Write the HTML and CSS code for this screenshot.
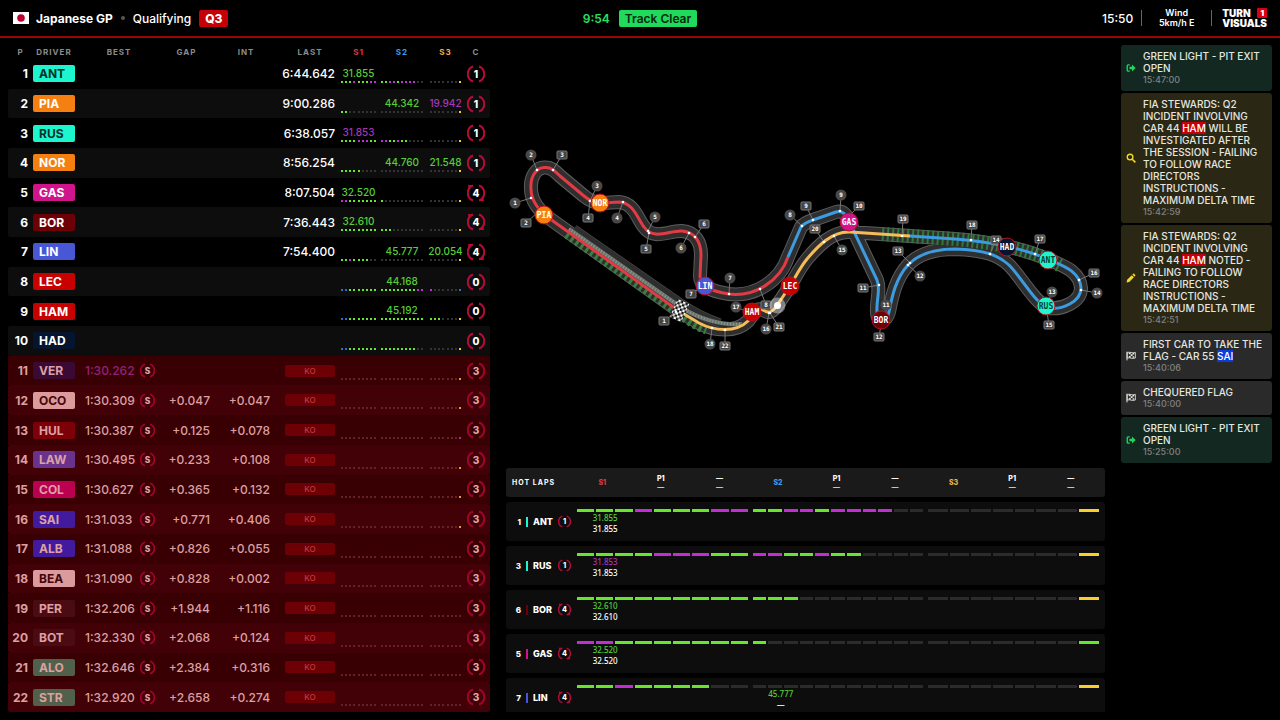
FILE: index.html
```html
<!DOCTYPE html>
<html lang="en">
<head>
<meta charset="utf-8">
<meta name="viewport" content="width=device-width, initial-scale=1">
<title>Japanese GP - Qualifying</title>
<link rel="stylesheet" href="styles.css">
</head>
<body>
<header class="topbar">
  <div class="event">
    <svg class="flag" viewBox="0 0 16 12" role="img" aria-label="Japan"><rect width="16" height="12" fill="#fff"/><circle cx="8" cy="6" r="3.8" fill="#bc002d"/></svg>
    <h1>Japanese GP</h1>
    <span class="bullet"></span>
    <span class="session">Qualifying</span>
    <span class="tag tag-red">Q3</span>
  </div>
  <div class="status">
    <span class="clock">9:54</span>
    <span class="tag tag-green">Track Clear</span>
  </div>
  <div class="info">
    <span class="local-time">15:50</span>
    <span class="divider"></span>
    <span class="wind">Wind<br>5km/h E</span>
    <span class="divider"></span>
    <span class="brand"><span class="brand-line">TURN<i>1</i></span><span class="brand-line">VISUALS</span></span>
  </div>
</header>
<main class="board">
  <table class="timing">
    <thead>
      <tr><th class="pos">P</th><th class="driver">DRIVER</th><th class="best">BEST</th><th class="gap">GAP</th><th class="int">INT</th><th class="last">LAST</th><th class="s1 red">S1</th><th class="s2 blue">S2</th><th class="s3 orange">S3</th><th class="tyre">C</th></tr>
    </thead>
    <tbody id="rows"></tbody>
  </table>
  <div class="center">
    <svg class="map" viewBox="506 45 599 417" role="img" aria-label="Track map">
      <defs>
        <path id="lap" d="M679 311 L553 221 Q531 206 531 189 C530 176 537 167 545 167.500 C551 167 555 171 560 176 L584 196 Q592 203 603 203 L619 202 C634 203 637 218 644 227 C654 241 670 230 682 231 C695 232 701 242 701 255 L700 276 C700 286 710 291 729 294 C755 297 780 281 788 257 L801 227 Q804 223 813 220 L836 212 C842 210 846 214 849 221 L877 280 C881 290 876 300 877 312 C877 323 887 322 889 312 C892 296 896 278 908 265 C920 252 940 249 955 249 C985 250 998 255 1009 265 C1022 278 1034 302 1048 308 C1062 310 1081 302 1081 288 C1080 270 1060 265 1048 259 C1018 247 990 242 955 239 L910 236 L850 232 C832 231 818 246 807 259 C799 269 795 278 790 286 L778 304 Q771 315 765 311 C756 306 755 312 748 321 C736 333 714 331 699 323 Z"/>
        <pattern id="chequer" width="5" height="5" patternUnits="userSpaceOnUse"><rect width="5" height="5" fill="#111"/><rect width="2.500" height="2.500" fill="#fff"/><rect x="2.500" y="2.500" width="2.500" height="2.500" fill="#fff"/></pattern>
      </defs>
      <use href="#lap" class="edge"/>
      <use href="#lap" class="asphalt"/>
      <path class="pit-edge" d="M574 229 L682 304 Q700 316 720 323"/>
      <path class="pit-asphalt" d="M574 229 L682 304 Q700 316 720 323"/>
      <path class="pit-lane" d="M569 229 L682 308 Q712 326 742 324"/>
      <path class="pit-dots" d="M569 229 L682 308 Q712 326 742 324"/>
      <path class="zone-side" d="M566 235 L677 313 Q690 325 706 331"/>
      <path class="zone" d="M882 234 L955 239 C990 242 1018 247 1048 259 L1061 266"/>
      <path class="line red" d="M676 309 L553 221 Q531 206 531 189 C530 176 537 167 545 167.500 C551 167 555 171 560 176 L584 196 Q592 203 603 203 L619 202 C634 203 637 218 644 227 C654 241 670 230 682 231 C695 232 701 242 701 255 L700 276 C700 286 710 291 729 294 C755 297 780 281 788 257"/>
      <path class="line blue" d="M788 257 L801 227 Q804 223 813 220 L836 212 C842 210 846 214 849 221 L877 280 C881 290 876 300 877 312 C877 323 887 322 889 312 C892 296 896 278 908 265 C920 252 940 249 955 249 C985 250 998 255 1009 265 C1022 278 1034 302 1048 308 C1062 310 1081 302 1081 288 C1080 270 1060 265 1048 259 C1018 247 990 242 955 239 L910 236"/>
      <path class="line orange" d="M910 236 L850 232 C832 231 818 246 807 259 C799 269 795 278 790 286 L778 304 Q771 315 765 311 C756 306 755 312 748 321 C736 333 714 331 699 323 L684 314"/>
      <rect x="-6.250" y="-10" width="12.500" height="20" fill="url(#chequer)" transform="translate(679.500 310.500) rotate(24)"/>
      <g id="markers"></g>
      <circle cx="777.500" cy="305.500" r="8" fill="#fff" opacity=".4"/>
      <circle cx="777.500" cy="305.500" r="3.500" fill="#fff"/>
      <g id="cars"></g>
    </svg>
    <section class="hot" aria-label="Hot laps">
      <div class="hot-head">
        <h2>HOT LAPS</h2>
        <span class="red">S1</span><span>P1<br><b>—</b></span><span>—<br><b>—</b></span>
        <span class="blue">S2</span><span>P1<br><b>—</b></span><span>—<br><b>—</b></span>
        <span class="orange">S3</span><span>P1<br><b>—</b></span><span>—<br><b>—</b></span>
      </div>
      <div class="hot-rows" id="hot"></div>
    </section>
  </div>
  <aside class="messages" aria-label="Race control messages">
    <article class="msg green"><svg class="icon" viewBox="0 0 16 16"><path d="M6 3H3.500Q2 3 2 4.500v7Q2 13 3.500 13H6" fill="none" stroke="currentColor" stroke-width="2.200"/><path d="M9.500 2.500 15.500 8l-6 5.500V10H5.500V6h4z" fill="currentColor"/></svg><div><p>GREEN LIGHT - PIT EXIT<br>OPEN</p><time>15:47:00</time></div></article>
    <article class="msg yellow"><svg class="icon" viewBox="0 0 16 16" fill="none" stroke="currentColor"><circle cx="6.500" cy="6.500" r="4.500" stroke-width="2.200"/><path d="m10 10 5 5" stroke-width="2.600"/></svg><div><p>FIA STEWARDS: Q2<br>INCIDENT INVOLVING<br>CAR 44 <mark>HAM</mark> WILL BE<br>INVESTIGATED AFTER<br>THE SESSION - FAILING<br>TO FOLLOW RACE<br>DIRECTORS<br>INSTRUCTIONS -<br>MAXIMUM DELTA TIME</p><time>15:42:59</time></div></article>
    <article class="msg yellow"><svg class="icon" viewBox="0 0 16 16" fill="currentColor"><path d="m1 15 .8-4.200 7.400-7.400 3.400 3.400-7.400 7.400zM10.200 2.400l1.300-1.200q.8-.6 1.500 0l1.800 1.800q.7.800 0 1.500l-1.200 1.300z"/></svg><div><p>FIA STEWARDS: Q2<br>INCIDENT INVOLVING<br>CAR 44 <mark>HAM</mark> NOTED -<br>FAILING TO FOLLOW<br>RACE DIRECTORS<br>INSTRUCTIONS -<br>MAXIMUM DELTA TIME</p><time>15:42:51</time></div></article>
    <article class="msg grey"><svg class="icon" viewBox="0 0 16 16"><path d="M1.500 1v14" stroke="currentColor" stroke-width="1.600"/><path d="M2 2.500q3-1.200 6 0t7-.3v9q-4 1.500-7 .2t-6 .2z" fill="none" stroke="currentColor" stroke-width="1.300"/><path d="M4.500 2.500h3v2.800h-3zM10.500 2.800h2.700v2.700h-2.700zM7.500 5.300h3V8h-3zM4.500 8h3v2.700h-3zM10.500 8.200h2.700v2.700h-2.700z" fill="currentColor"/></svg><div><p>FIRST CAR TO TAKE THE<br>FLAG - CAR 55 <mark class="sai">SAI</mark></p><time>15:40:06</time></div></article>
    <article class="msg grey"><svg class="icon" viewBox="0 0 16 16"><path d="M1.500 1v14" stroke="currentColor" stroke-width="1.600"/><path d="M2 2.500q3-1.200 6 0t7-.3v9q-4 1.500-7 .2t-6 .2z" fill="none" stroke="currentColor" stroke-width="1.300"/><path d="M4.500 2.500h3v2.800h-3zM10.500 2.800h2.700v2.700h-2.700zM7.500 5.300h3V8h-3zM4.500 8h3v2.700h-3zM10.500 8.200h2.700v2.700h-2.700z" fill="currentColor"/></svg><div><p>CHEQUERED FLAG</p><time>15:40:00</time></div></article>
    <article class="msg green"><svg class="icon" viewBox="0 0 16 16"><path d="M6 3H3.500Q2 3 2 4.500v7Q2 13 3.500 13H6" fill="none" stroke="currentColor" stroke-width="2.200"/><path d="M9.500 2.500 15.500 8l-6 5.500V10H5.500V6h4z" fill="currentColor"/></svg><div><p>GREEN LIGHT - PIT EXIT<br>OPEN</p><time>15:25:00</time></div></article>
  </aside>
</main>
<script src="app.js"></script>
</body>
</html>
```
FILE: styles.css
```css
* { box-sizing: border-box; }
body {
  margin: 0;
  height: 100vh;
  display: flex;
  flex-direction: column;
  background: #000;
  color: #fff;
  font-family: Inter, "Liberation Sans", sans-serif;
  font-size: 12px;
  overflow: hidden;
}
h1, h2, p { margin: 0; font-size: inherit; }
.red { color: #e0383f; }
.blue { color: #3d9be9; }
.orange { color: #f5b041; }

/* Top bar */
.topbar {
  display: grid;
  grid-template-columns: 1fr auto 1fr;
  align-items: center;
  height: 38px;
  flex: none;
  padding: 0 13px;
  border-bottom: 2px solid #9a0505;
}
.event, .status, .info { display: flex; align-items: center; }
.flag { width: 16px; height: 12px; margin-right: 7px; }
.event h1 { font-weight: 700; }
.bullet { width: 4px; height: 4px; margin: 0 8px; border-radius: 50%; background: #555; }
.session { font-weight: 500; margin-right: 8px; }
.tag { height: 17px; line-height: 17px; border-radius: 2px; padding: 0 6px; }
.tag-red { background: #c50006; font-weight: 800; }
.tag-green { background: #1fda5b; color: #06290f; font-weight: 600; }
.status { gap: 9px; }
.clock { color: #2ae05f; font-weight: 600; }
.info { justify-content: flex-end; }
.local-time { font-weight: 500; padding-right: 8px; }
.divider { width: 1px; height: 16px; background: #666; }
.wind { width: 69px; font-size: 9px; line-height: 10px; text-align: center; font-weight: 600; }
.brand { display: flex; flex-direction: column; padding-left: 10px; font-size: 10px; line-height: 10px; font-weight: 900; }
.brand-line { display: flex; justify-content: space-between; }
.brand i { background: #d80012; font-style: normal; font-size: 8px; padding: 0 3px; border-radius: 1px; }

/* Layout */
.board {
  flex: 1;
  min-height: 0;
  display: grid;
  grid-template-columns: 482px minmax(0, 1fr) 151px;
  gap: 16px;
  padding: 7px 8px 8px;
}

/* Timing table */
.timing { display: flex; flex-direction: column; min-height: 0; }
.timing thead, .timing tbody { display: grid; }
.timing thead { height: 14px; font-size: 8px; color: #8c8c8c; letter-spacing: 1px; flex: none; }
.timing tbody { flex: 1; grid-auto-rows: minmax(0, 1fr); }
.timing tr {
  display: grid;
  grid-template-columns: 25px 42px 88px 47px 60px 65px 41px 47px 38px 26px;
  align-items: center;
}
.timing th, .timing td { padding: 0; text-align: center; }
.timing tbody tr:nth-child(even) { background: #0d0d0d; border-radius: 2px; }
.timing .int { padding-left: 12px; }
.timing th.last { padding-left: 15px; }
.timing .s1 { padding-left: 6px; }
.timing .s2 { padding-left: 5px; }
.timing .s3 { padding-left: 7px; }
.timing .tyre { padding-left: 4px; }
.timing th.red { color: #e0383f; }
.timing th.blue { color: #3d9be9; }
.timing th.orange { color: #f5b041; }
.timing td.pos { text-align: right; padding-right: 5px; font-weight: 700; }
.timing td.gap, .timing td.int, .timing td.last { text-align: right; font-weight: 500; }
.timing td.best { display: flex; align-items: center; justify-content: space-between; padding: 0 8px 0 10px; font-weight: 500; }
.code { display: block; height: 17px; line-height: 17px; padding-left: 6px; border-radius: 2px; text-align: left; font-weight: 700; }
.dark { color: #04302a; }
.sector { display: flex; flex-direction: column; align-items: center; padding-top: 4px; }
.sector output { height: 14px; line-height: 16px; font-size: 10px; margin-bottom: 2px; font-weight: 500; }
.dots { display: flex; justify-content: space-between; width: 100%; }
.dots i { width: 2px; height: 2px; background: #333; }
.G { --c: #63e82c; } .P { --c: #c12ed6; } .Y { --c: #f7d02c; } .B { --c: #2b6fd0; }
.dots i[class] { background: var(--c); }
.t-G { color: #56cf36; } .t-P { color: #a835b8; }
.ring { display: block; width: 18px; height: 18px; margin: 0 auto; }
.ring text { fill: #fff; font-size: 10px; font-weight: 800; text-anchor: middle; }
.ring path { fill: none; stroke: #b80a38; stroke-width: 2; }
.ring .tip { fill: #b80a38; stroke: none; }
.ring.small { width: 15px; height: 15px; margin: 0; }

/* Knocked-out rows */
.timing tbody tr.out { background: #390004; color: #dda0a2; }
.timing tbody tr.out:nth-child(even) { background: #420007; }
.out .ko { display: block; width: 50px; height: 12px; margin-left: auto; line-height: 12px; background: #6c0004; color: #c23a42; font-size: 8px; text-align: center; border-radius: 2px; }
.out .ring text { fill: #e0a5a8; }
.out .ring path { stroke: #a0042c; }
.out .dots i { background: #652328; }
.out .dots i.Y { background: #e89c34; }
.out .dots i.P { background: #b02c90; }
.out .fastest { color: #93207c; }

/* Track map */
.center { display: grid; grid-template-rows: 417fr 244fr; gap: 6px; min-height: 0; }
.map { width: 100%; height: 100%; min-height: 0; }
.map path, .edge, .asphalt { fill: none; stroke-linejoin: round; }
.edge { stroke: #5c5c5c; stroke-width: 14; }
.asphalt { stroke: #2e2e2e; stroke-width: 12; }
.map .pit-edge { stroke: #505050; stroke-width: 9; }
.map .pit-asphalt { stroke: #2e2e2e; stroke-width: 8; }
.map .pit-lane { stroke: #6a736e; stroke-width: 4; }
.map .pit-dots { stroke: #8c9a92; stroke-width: 3; stroke-dasharray: 1 2; }
.map .zone-side { stroke: #37803f; stroke-width: 7; stroke-dasharray: 3 3; }
.map .zone { stroke: #2f7a3a; stroke-width: 14; stroke-dasharray: 2 3; }
.map .line { stroke-width: 3; }
.line.red { stroke: #e23b45; }
.line.blue { stroke: #3d9be0; }
.line.orange { stroke: #f7bb58; }
.leader { stroke: #777; stroke-width: 1; }
.spot { fill: #fff; }
.corner { fill: #484848; }
.post { fill: #444; stroke: #777; stroke-width: 1; }
.map text { font-family: "DejaVu Sans Mono", monospace; font-weight: 700; text-anchor: middle; fill: #fff; }
.map .num { font-size: 6px; }
.car text { font-size: 8px; }
.car circle { stroke: #bd0d20; stroke-width: 1; }
.map .car .dark { fill: #04403a; }

/* Hot laps */
.hot { display: flex; flex-direction: column; gap: 5px; overflow: hidden; min-height: 0; }
.hot-head {
  display: grid;
  grid-template-columns: 67px repeat(9, minmax(0, 1fr));
  align-items: center;
  flex: none;
  height: 29px;
  padding-right: 5px;
  border-radius: 3px;
  background: #1a1a1a;
  font-size: 7px;
  line-height: 9px;
  font-weight: 800;
  text-align: center;
}
.hot-head h2 { padding-left: 6px; text-align: left; white-space: nowrap; letter-spacing: 1px; }
.hot-head b { font-weight: 500; }
.hot-rows { display: flex; flex-direction: column; gap: 5px; }
.hot-row {
  display: grid;
  grid-template-columns: 66px minmax(0, 1fr);
  gap: 5px;
  flex: none;
  height: 39px;
  padding: 7px 6px 0 0;
  border-radius: 3px;
  background: #0d0d0d;
}
.who { display: grid; grid-template-columns: 8px 2px 20px 13px; column-gap: 5px; align-items: center; height: 25px; padding-left: 7px; font-size: 9px; font-weight: 800; }
.who .place { font-size: 8px; text-align: right; }
.who .bar { height: 10px; }
.who .ring { width: 13px; height: 13px; margin: 0; }
.laps { display: grid; grid-template-columns: repeat(3, minmax(0, 1fr)); gap: 5px; }
.segs { display: flex; gap: 2px; }
.segs i { flex: 1; height: 3px; background: #2b2b2b; }
.segs i[class] { background: var(--c); }
.times { display: flex; flex-direction: column; width: 33%; text-align: center; font-family: "Noto Sans", sans-serif; font-weight: 500; font-size: 8px; line-height: 11px; }

/* Race control */
.messages { display: flex; flex-direction: column; gap: 2px; min-height: 0; }
.msg {
  display: grid;
  grid-template-columns: 22px minmax(0, 1fr);
  align-items: center;
  padding: 5px 0;
  border-radius: 3px;
  font-size: 10px;
  line-height: 12px;
  font-weight: 500;
  color: #e6e6e0;
}
.msg p { white-space: nowrap; }
.msg time { display: block; color: #808080; font-size: 9px; }
.msg .icon { width: 10px; height: 10px; margin-left: 5px; }
.msg.green { background: #132820; }
.msg.green .icon { color: #1fd65a; }
.msg.yellow { background: #2a2814; }
.msg.yellow .icon { color: #f2da2c; }
.msg.grey { background: #2a2a2a; }
.msg mark { background: #c5000c; color: #fff; }
.msg mark.sai { background: #0b3ce0; }
```
FILE: app.js
```js
const drivers = [
  ["ANT", "#1cf5cd", "6:44.642", "31.855G", "", "", "GGGPGGGPP", "GGPPGPPPP--", "-------Y", 1],
  ["PIA", "#f57f10", "9:00.286", "", "44.342G", "19.942P", "GG-------", "-----------", "-------Y", 1],
  ["RUS", "#1cf5cd", "6:38.057", "31.853P", "", "", "GGGGPPPGG", "PPGGPGG----", "-------Y", 1],
  ["NOR", "#f57f10", "8:56.254", "", "44.760G", "21.548G", "GGGGG----", "-----------", "-------Y", 1],
  ["GAS", "#d0148c", "8:07.504", "32.520G", "", "", "PPGGGGGGG", "G----------", "-------Y", 4],
  ["BOR", "#6d0007", "7:36.443", "32.610G", "", "", "GGGGGGGGG", "GGG--------", "-------Y", 4],
  ["LIN", "#4757d6", "7:54.400", "", "45.777G", "20.054G", "GGPGGGG--", "-----------", "-------Y", 4],
  ["LEC", "#c80000", "", "", "44.168G", "", "BBGGGGGGG", "GGGGGGGGGPP", "P------B", 0],
  ["HAM", "#c80000", "", "", "45.192G", "", "BBGGGGGGG", "GGGGGGGGGGG", "GGG----Y", 0],
  ["HAD", "#051530", "", "", "", "", "BBGGGGGGG", "GGGGGGGGG--", "-------Y", 0]
];
const out = [
  ["VER", "#3a0a35", "1:30.262", "", "", "Y"],
  ["OCO", "#dd9a9c", "1:30.309", "+0.047", "+0.047", "Y"],
  ["HUL", "#7d0008", "1:30.387", "+0.125", "+0.078", "P"],
  ["LAW", "#69328c", "1:30.495", "+0.233", "+0.108", "Y"],
  ["COL", "#bb0052", "1:30.627", "+0.365", "+0.132", "Y"],
  ["SAI", "#421a9d", "1:31.033", "+0.771", "+0.406", "Y"],
  ["ALB", "#421a9d", "1:31.088", "+0.826", "+0.055", "-"],
  ["BEA", "#dd9a9c", "1:31.090", "+0.828", "+0.002", "-"],
  ["PER", "#4a0c12", "1:32.206", "+1.944", "+1.116", "-"],
  ["BOT", "#4a0c12", "1:32.330", "+2.068", "+0.124", "-"],
  ["ALO", "#50604a", "1:32.646", "+2.384", "+0.316", "-"],
  ["STR", "#50604a", "1:32.920", "+2.658", "+0.274", "-"]
];

const marks = s => [...s].map(c => c === "-" ? "<i></i>" : `<i class="${c}"></i>`).join("");
const ring = (label, small) => {
  const tips = label === 4 ? '<path class="tip" d="M1 1h5L2 6zM17 17h-5l4-5z"/>' : "";
  return `<svg class="ring${small ? " small" : ""}" viewBox="0 0 18 18"><path d="M6 1.500A8 8 0 0 0 6 16.500M12 1.500A8 8 0 0 1 12 16.500"/>${tips}<text x="9" y="12.600">${label}</text></svg>`;
};
const sector = (cls, v, segs) =>
  `<td class="sector ${cls}"><output class="t-${v.slice(-1)}">${v.slice(0, -1)}</output><span class="dots">${marks(segs)}</span></td>`;

let html = "";
drivers.forEach(([code, col, last, v1, v2, v3, a, b, c, n], i) => {
  const dark = col === "#1cf5cd" ? " dark" : "";
  html += `<tr><td class="pos">${i + 1}</td><td><span class="code${dark}" style="background:${col}">${code}</span></td><td class="best"></td><td class="gap"></td><td class="int"></td><td class="last">${last}</td>${sector("s1", v1, a)}${sector("s2", v2, b)}${sector("s3", v3, c)}<td class="tyre">${ring(n)}</td></tr>`;
});
out.forEach(([code, col, best, gap, int, end], i) => {
  const ink = col === "#dd9a9c" ? ";color:#42060c" : "";
  html += `<tr class="out"><td class="pos">${i + 11}</td><td><span class="code" style="background:${col}${ink}">${code}</span></td><td class="best"><span class="${i ? "" : "fastest"}">${best}</span>${ring("S", true)}</td><td class="gap">${gap}</td><td class="int">${int}</td><td class="last"><span class="ko">KO</span></td>${sector("s1", "", "---------")}${sector("s2", "", "-----------")}${sector("s3", "", "-------" + end)}<td class="tyre">${ring(3)}</td></tr>`;
});
document.getElementById("rows").innerHTML = html;

const hotOrder = [0, 2, 5, 4, 6];
document.getElementById("hot").innerHTML = hotOrder.map(i => {
  const [code, col, , v1, v2, , a, b, c, n] = drivers[i];
  const last = code === "GAS" ? "-------G" : c;
  const times = (v, second) => v ? `<div class="times"><span class="t-${v.slice(-1)}">${v.slice(0, -1)}</span><span>${second}</span></div>` : "";
  return `<div class="hot-row"><div class="who"><span class="place">${i + 1}</span><span class="bar" style="background:${col}"></span><span>${code}</span>${ring(n)}</div><div class="laps"><div><div class="segs">${marks(a)}</div>${times(v1, v1.slice(0, -1))}</div><div><div class="segs">${marks(b)}</div>${times(v2, "—")}</div><div><div class="segs">${marks(last)}</div></div></div></div>`;
}).join("");

/* label, x, y, then the point on track it refers to */
const corners = [
  [1, 515, 203, 531, 198], [2, 531, 155, 537, 170], [3, 597, 186, 590, 201], [4, 617, 218, 623, 202],
  [5, 655, 217, 648, 231], [6, 681, 248, 689, 233], [7, 730, 278, 729, 294], [8, 790, 215, 802, 226],
  [9, 841, 195, 840, 211], [11, 886, 305, 886, 316], [12, 920, 276, 908, 265], [13, 1052, 292, 1048, 304],
  [14, 1097, 293, 1081, 290], [15, 842, 250, 834, 236], [16, 766, 329, 769, 313], [17, 736, 307, 748, 312], [18, 710, 344, 712, 328]
];
const posts = [
  [1, 664, 321, 676, 312], [2, 526, 223, 538, 212], [3, 562, 155, 553, 170], [4, 588, 218, 590, 201],
  [5, 646, 249, 649, 233], [6, 704, 224, 695, 237], [7, 691, 294, 702, 287], [8, 766, 305, 760, 289],
  [9, 806, 206, 813, 220], [10, 859, 206, 850, 215], [11, 863, 288, 879, 285], [12, 879, 337, 881, 325],
  [13, 898, 251, 910, 263], [14, 996, 240, 990, 254], [15, 1049, 325, 1047, 312], [16, 1094, 273, 1079, 280],
  [17, 1040, 239, 1035, 254], [18, 972, 225, 971, 240], [19, 903, 219, 902, 236], [20, 815, 229, 824, 242],
  [21, 779, 327, 770, 313], [22, 725, 346, 725, 330]
];
const link = ([, x, y, px, py]) => `<line class="leader" x1="${x}" y1="${y}" x2="${px}" y2="${py}"/><circle class="spot" cx="${px}" cy="${py}" r="1.300"/>`;
const num = ([n, x, y]) => `<text class="num" x="${x}" y="${y + 2}">${n}</text>`;
document.getElementById("markers").innerHTML =
  [...corners, ...posts].map(link).join("") +
  corners.map(m => `<circle class="corner" cx="${m[1]}" cy="${m[2]}" r="5.500"/>${num(m)}`).join("") +
  posts.map(m => `<rect class="post" x="${m[1] - 5}" y="${m[2] - 4}" width="10" height="8" rx="1"/>${num(m)}`).join("");

const cars = { PIA: [544, 215], NOR: [600, 203], LIN: [705, 286], HAM: [752, 312], LEC: [790, 286], GAS: [849, 222], BOR: [881, 320], HAD: [1007, 247], ANT: [1048, 260], RUS: [1046, 306] };
document.getElementById("cars").innerHTML = Object.entries(cars).map(([code, [x, y]]) => {
  const col = drivers.find(d => d[0] === code)[1];
  return `<g class="car"><circle cx="${x}" cy="${y}" r="9" fill="${col}"/><text class="${col === "#1cf5cd" ? "dark" : ""}" x="${x}" y="${y + 3}">${code}</text></g>`;
}).join("");
```
